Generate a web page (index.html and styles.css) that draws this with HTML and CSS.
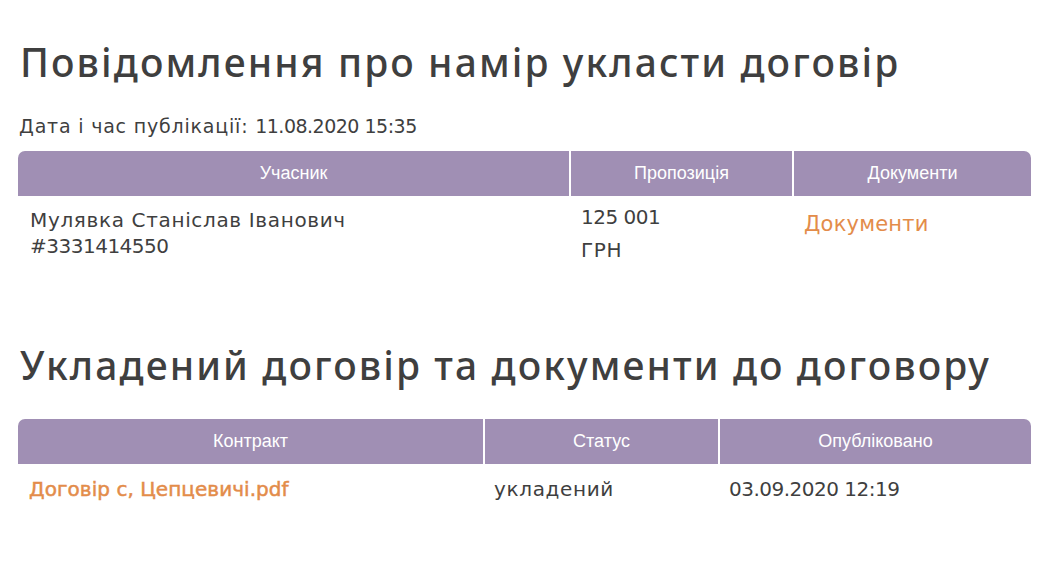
FILE: index.html
```html
<!DOCTYPE html>
<html lang="uk">
<head>
<meta charset="utf-8">
<link rel="stylesheet" href="styles.css">
</head>
<body>
<main class="page">
  <section class="block">
    <h1 class="title">Повідомлення про намір укласти договір</h1>
    <p class="meta">Дата і час публікації: <span class="num">11.08.2020 15:35</span></p>
    <table class="grid grid-a">
      <thead>
        <tr><th class="c1">Учасник</th><th class="c2">Пропозиція</th><th class="c3">Документи</th></tr>
      </thead>
      <tbody>
        <tr>
          <td class="cell">Мулявка Станіслав Іванович<br><span class="num">#3331414550</span></td>
          <td class="cell"><div class="amount num">125 001</div><div class="amount">ГРН</div></td>
          <td class="cell"><a class="doclink" href="#">Документи</a></td>
        </tr>
      </tbody>
    </table>
  </section>
  <section class="block block-2">
    <h1 class="title">Укладений договір та документи до договору</h1>
    <table class="grid grid-b">
      <thead>
        <tr><th class="d1">Контракт</th><th class="d2">Статус</th><th class="d3">Опубліковано</th></tr>
      </thead>
      <tbody>
        <tr>
          <td class="cell"><a class="filelink" href="#">Договір с, Цепцевичі.pdf</a></td>
          <td class="cell">укладений</td>
          <td class="cell"><span class="num">03.09.2020 12:19</span></td>
        </tr>
      </tbody>
    </table>
  </section>
</main>
</body>
</html>
```
FILE: styles.css
```css
html, body { margin: 0; padding: 0; background: #fff; }
body {
  font-family: "DejaVu Sans", "Noto Sans", sans-serif;
  color: #3f3f3f;
}
.page {
  padding: 36px 13px 0 18px;
  display: flex;
  flex-direction: column;
}
.title {
  margin: 0 0 0 2px;
  font-family: "Noto Sans", "DejaVu Sans", sans-serif;
  font-size: 39px;
  line-height: 52px;
  font-weight: 500;
  letter-spacing: 2.1px;
  color: #3f3f3f;
}
.meta {
  margin: 26px 0 13px 1px;
  font-size: 19px;
  line-height: 24px;
  letter-spacing: 0.8px;
}
.num { letter-spacing: -0.5px; }
.grid {
  width: 100%;
  border-collapse: separate;
  border-spacing: 0;
}
.grid th {
  background: #a08fb4;
  color: #fff;
  font-family: "Liberation Sans", Arial, sans-serif;
  font-weight: 400;
  font-size: 18px;
  height: 45px;
  padding: 0;
  text-align: center;
}
.grid th + th { border-left: 2px solid #fff; }
.grid th:first-child { border-top-left-radius: 7px; }
.grid th:last-child { border-top-right-radius: 7px; }
.c1 { width: 551px; }
.c2 { width: 221px; }
.d1 { width: 465px; }
.d2 { width: 233px; }
.cell {
  vertical-align: top;
  padding: 11px 10px 0 12px;
  font-size: 20px;
  line-height: 26px;
  letter-spacing: 0.65px;
}
.amount { line-height: 33px; margin-top: -6px; }
.amount + .amount { margin-top: 0; }
.doclink {
  color: #e38c4a;
  text-decoration: none;
  font-size: 21px;
  letter-spacing: 0.2px;
  line-height: 34px;
}
.block-2 { margin-top: 72px; }
.block-2 .title { margin-bottom: 28px; }
.filelink {
  color: #e38c4a;
  text-decoration: none;
  letter-spacing: 0.05px;
  -webkit-text-stroke: 0.5px #e38c4a;
}
.grid-b .cell { padding-top: 12px; padding-left: 11px; }
```
